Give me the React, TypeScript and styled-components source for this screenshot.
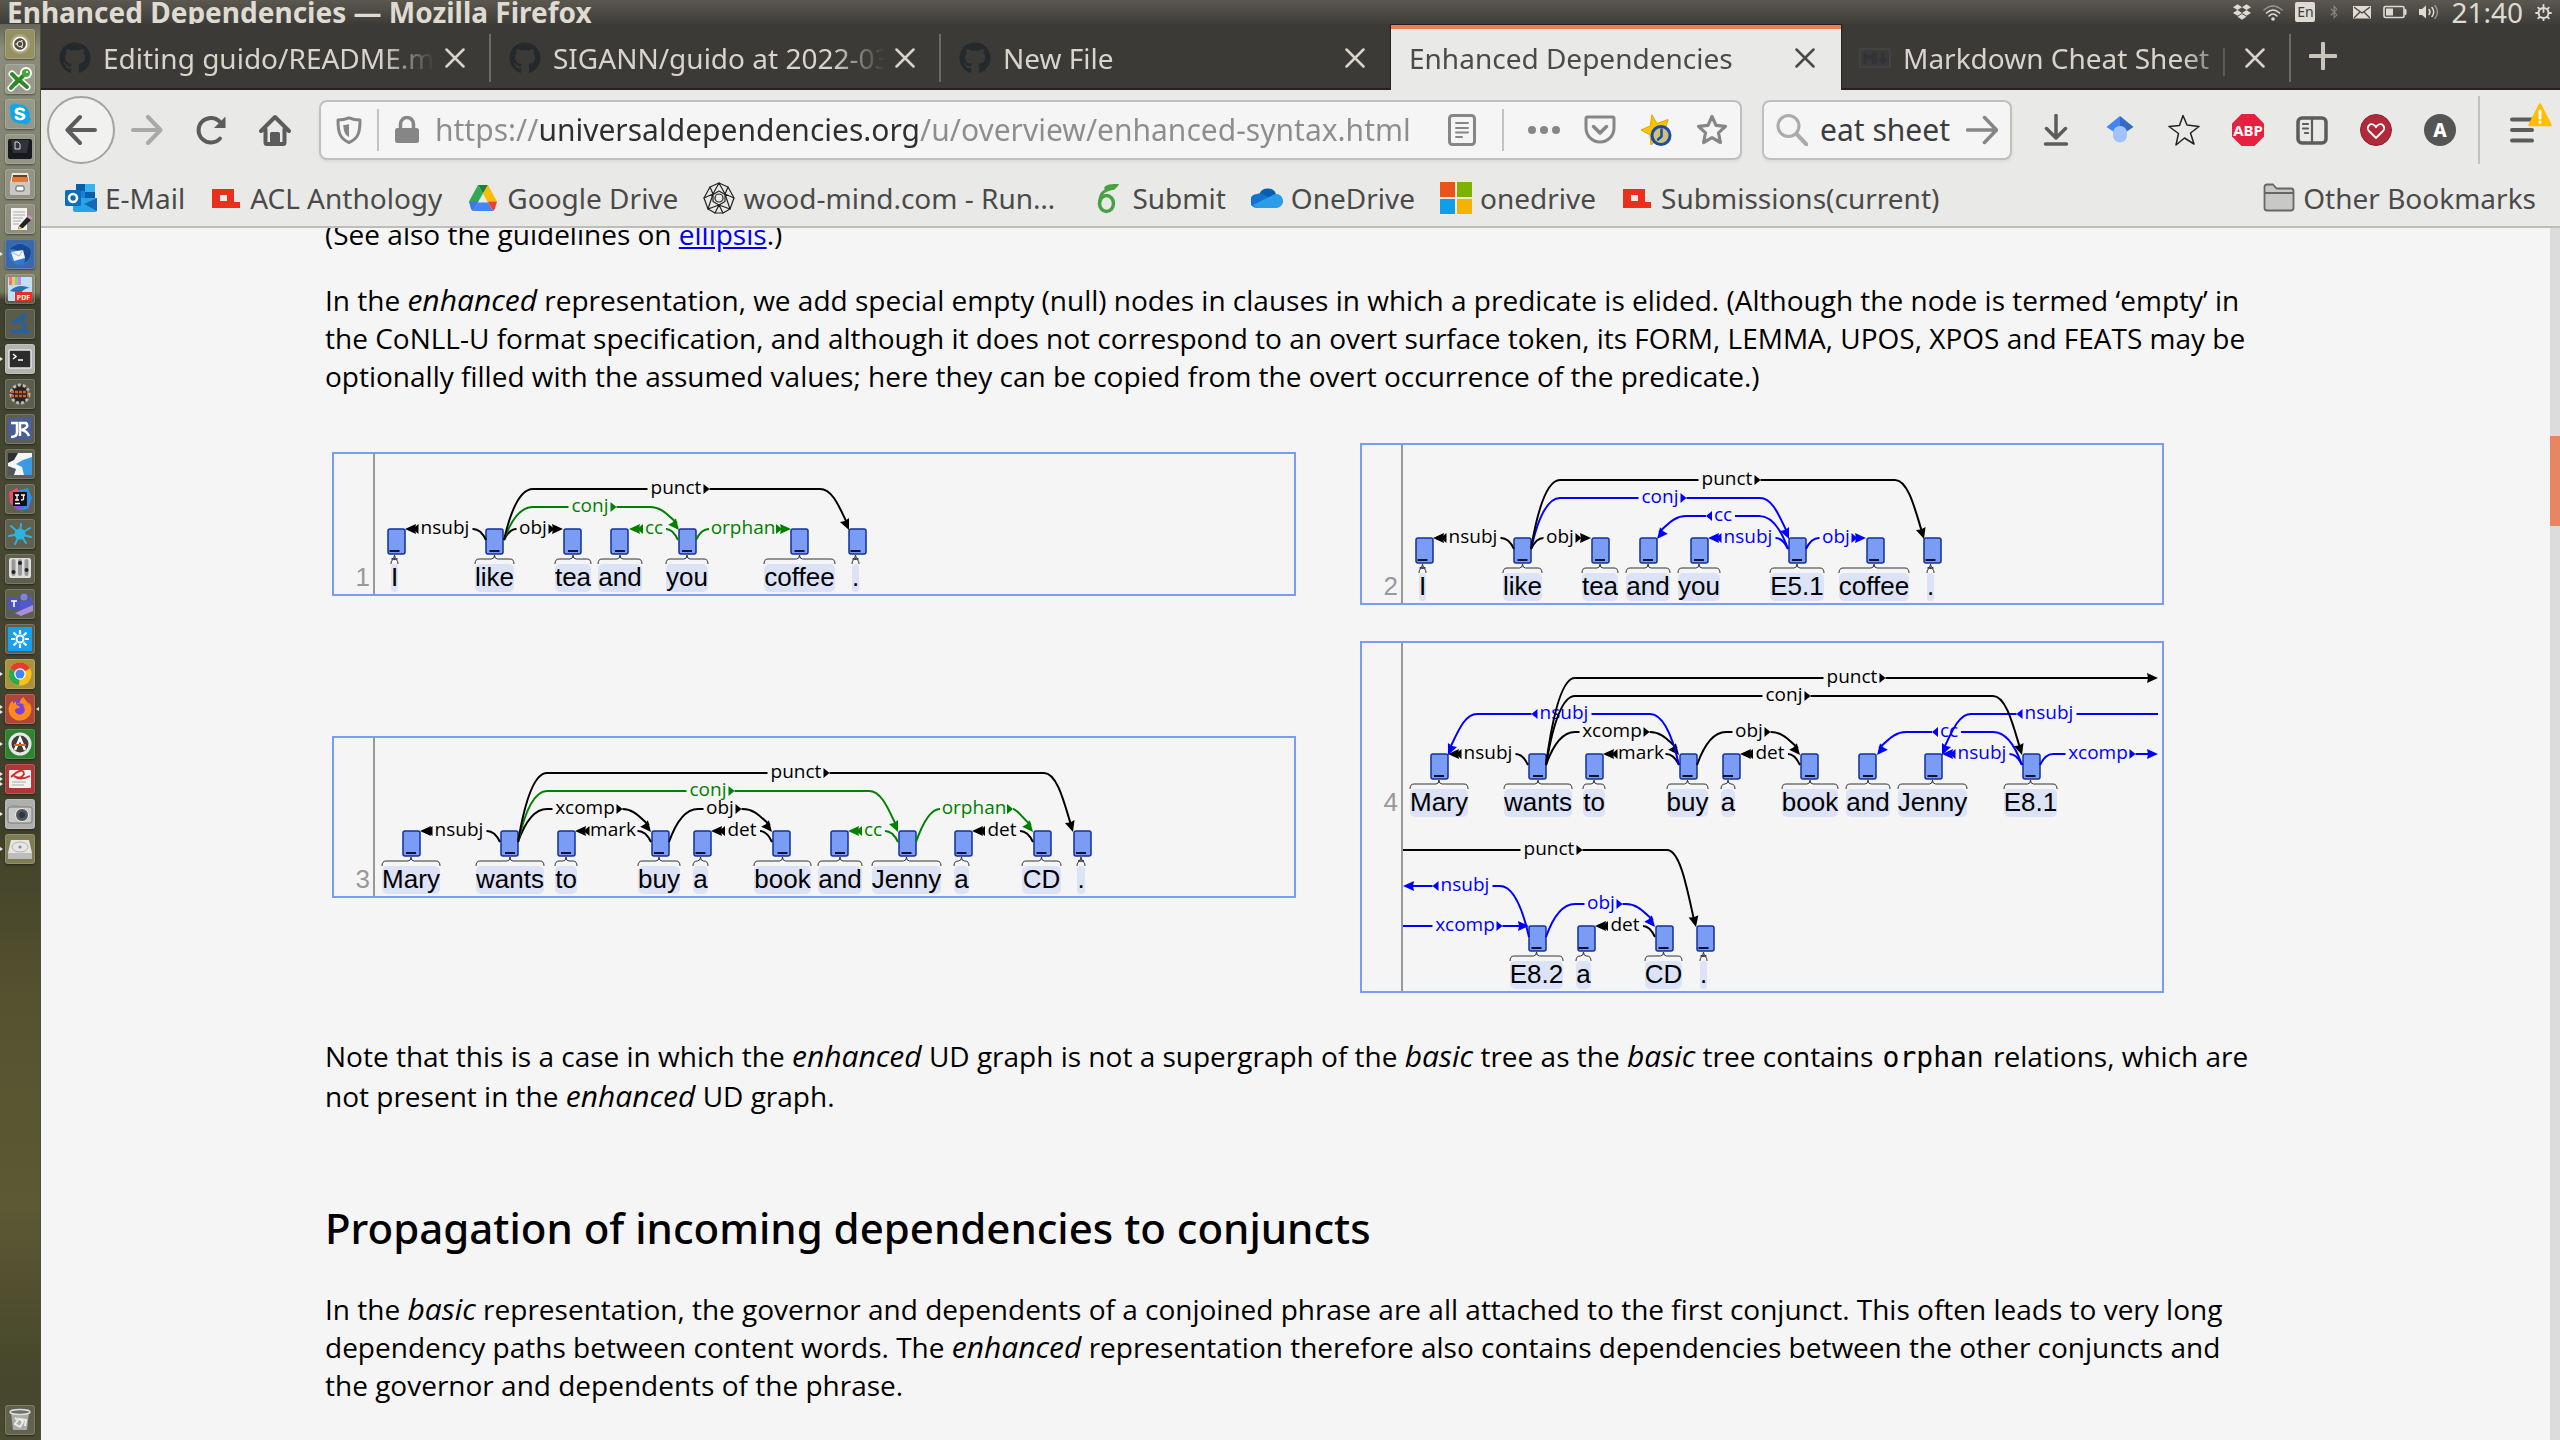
import React, { useMemo, useState } from 'react';
import type { ReactNode } from 'react';
import styled, { createGlobalStyle, css } from 'styled-components';
import { FaGithub, FaSkype, FaUbuntu, FaDropbox, FaBluetoothB, FaFirefoxBrowser } from 'react-icons/fa';

const UI = '"Noto Sans", "Open Sans", sans-serif';
const TEXT = '"Open Sans", "Noto Sans", sans-serif';
const WORDS = '"Liberation Sans", Arial, sans-serif';

const Global = createGlobalStyle`
  *, *::before, *::after { box-sizing: border-box; }
  body { margin: 0; background: #f5f5f5; }
  button { margin: 0; padding: 0; border: 0; background: none; color: inherit; font: inherit; cursor: pointer; }
  svg { display: block; flex: none; }
`;

/* ---------- desktop ---------- */

const Desktop = styled.div`
  display: flex;
  flex-direction: column;
  height: 100vh;
  overflow: hidden;
  font: 28px/38px ${UI};
`;

const Panel = styled.header`
  display: flex;
  align-items: center;
  justify-content: space-between;
  flex: none;
  height: 24px;
  padding: 0 8px 0 7px;
  overflow: hidden;
  background: linear-gradient(#5b584f, #3d3c38);
  color: #dfdbd2;
  line-height: 24px;
  white-space: nowrap;
`;

const PanelTitle = styled.strong`
  height: 24px;
  font-weight: 700;
`;

const Tray = styled.div`
  display: flex;
  align-items: center;
  gap: 12px;
  height: 24px;
`;

const LanguageBadge = styled.span`
  width: 20px;
  height: 20px;
  border-radius: 2px;
  background: #dfdbd2;
  color: #3d3c38;
  font-size: 14px;
  line-height: 20px;
  text-align: center;
`;

const Workspace = styled.div`
  display: flex;
  flex: 1;
  min-height: 0;
`;

const Launcher = styled.nav`
  display: flex;
  flex-direction: column;
  gap: 5px;
  flex: none;
  width: 41px;
  padding: 5px 5px 5px 0;
  border-right: 1px solid #4d4e42;
  background: linear-gradient(
    #66675a 0, #8b8d7b 24px, #7f816d 180px, #76775f 268px, #3d402e 276px,
    #474733 480px, #3f4029 800px, #55532f 980px, #5c5934 1180px, #45462b 1360px, #4a4b30 100%
  );
`;

const Tile = styled.button<{ $tone?: string; $last?: boolean }>`
  position: relative;
  display: flex;
  align-items: center;
  justify-content: center;
  flex: none;
  width: 30px;
  height: 30px;
  margin-left: 5px;
  margin-top: ${p => (p.$last ? 'auto' : '0')};
  border: 1px solid rgba(255, 255, 255, 0.16);
  border-radius: 3px;
  background: ${p => p.$tone ?? 'rgba(255, 255, 255, 0.14)'};
  box-shadow: 0 1px 2px rgba(0, 0, 0, 0.45);
`;

const Pips = styled.span`
  position: absolute;
  left: -6px;
  top: 0;
  display: flex;
  flex-direction: column;
  justify-content: center;
  gap: 1px;
  height: 28px;
`;

const Pip = styled.i<{ $flip?: boolean }>`
  border: solid transparent;
  border-width: 2px 0 2px 3px;
  border-left-color: #e6e6e2;
  ${p => p.$flip && css`
    position: absolute;
    right: -5px;
    border-width: 2px 3px 2px 0;
    border-right-color: #e6e6e2;
  `}
`;

/* ---------- browser window ---------- */

const Browser = styled.div`
  display: flex;
  flex-direction: column;
  flex: 1;
  min-width: 0;
`;

const TabStrip = styled.div`
  display: flex;
  flex: none;
  height: 66px;
  padding-top: 1px;
  background: #3b3a36;
  box-shadow: inset 0 -2px 0 #262022;
`;

const Tab = styled.div<{ $active?: boolean; $divider?: boolean }>`
  position: relative;
  display: flex;
  align-items: center;
  flex: 0 1 450px;
  min-width: 0;
  padding: 0 16px 0 18px;
  color: ${p => (p.$active ? '#4a4a48' : '#d8d4cb')};
  ${p => p.$active && css`
    background: #e9e9e7;
    border-top: 4px solid #e9804f;
    padding-bottom: 4px;
    box-shadow: 0 0 0 1px #262022;
    clip-path: inset(-1px -1px 0 -1px);
  `}
  ${p => p.$divider && css`
    &::after {
      content: '';
      position: absolute;
      right: 0;
      top: 9px;
      width: 2px;
      height: 48px;
      background: #6c6a65;
    }
  `}
`;

const TabTitle = styled.button`
  flex: 1;
  min-width: 0;
  overflow: hidden;
  text-align: left;
  white-space: nowrap;
  mask-image: linear-gradient(to left, transparent, #000 52px);
`;

const Favicon = styled.span`
  display: flex;
  width: 32px;
  margin-right: 12px;
  color: #24292e;
`;

const CloseButton = styled.button`
  display: flex;
  align-items: center;
  justify-content: center;
  flex: none;
  width: 40px;
  height: 40px;
`;

const NewTab = styled(CloseButton)`
  width: 64px;
  height: 62px;
  color: #c8c4bc;
`;

const Toolbar = styled.div`
  display: flex;
  align-items: center;
  flex: none;
  height: 80px;
  padding: 0 6px 0 6px;
  background: #e9e9e7;
  color: #5c5c5c;
`;

const ToolButton = styled.button<{ $faded?: boolean; $round?: boolean }>`
  position: relative;
  display: flex;
  align-items: center;
  justify-content: center;
  flex: none;
  width: 64px;
  height: 64px;
  opacity: ${p => (p.$faded ? 0.45 : 1)};
  ${p => p.$round && css`
    width: 68px;
    height: 68px;
    border: 2px solid #a3a3a2;
    border-radius: 50%;
    background: #f1f1f0;
  `}
`;

const Alert = styled.span`
  position: absolute;
  right: 2px;
  top: 5px;
`;

const Field = styled.div<{ $search?: boolean }>`
  display: flex;
  align-items: center;
  flex: ${p => (p.$search ? '0 0 250px' : '1')};
  min-width: 0;
  height: 60px;
  margin: ${p => (p.$search ? '0 12px 0 20px' : '0 0 0 12px')};
  border: 2px solid #c3bfbc;
  border-radius: 8px;
  background: #f5f5f5;
  color: #868686;
  box-shadow: 0 2px 3px rgba(0, 0, 0, 0.06);
`;

const FieldButton = styled.button`
  display: flex;
  align-items: center;
  justify-content: center;
  flex: none;
  width: 56px;
  height: 56px;
`;

const Rule = styled.i<{ $tall?: boolean }>`
  flex: none;
  width: 2px;
  height: ${p => (p.$tall ? 68 : 42)}px;
  margin: ${p => (p.$tall ? '0 10px 0 6px' : '0')};
  background: #c3c3c2;
`;

const FieldRule = styled(Rule)`
  margin: 0 12px;
`;

const TextInput = styled.input`
  flex: 1;
  min-width: 0;
  padding: 0;
  border: 0;
  outline: 0;
  background: none;
  color: #3c3c3c;
  font: 30px/40px ${UI};
`;

const AddressInput = styled(TextInput)<{ $from: number; $to: number }>`
  color: transparent;
  background: linear-gradient(
    to right,
    #8d8d8d ${p => p.$from}px, #2e2e2e ${p => p.$from}px,
    #2e2e2e ${p => p.$to}px, #8d8d8d ${p => p.$to}px
  );
  background-clip: text;
  -webkit-background-clip: text;
`;

const Bookmarks = styled.nav`
  display: flex;
  align-items: center;
  gap: 25px;
  flex: none;
  height: 58px;
  padding: 0 24px 0 24px;
  border-bottom: 2px solid #c0bdb9;
  background: #e9e9e7;
  color: #4a4a48;
`;

const Bookmark = styled.a<{ $end?: boolean }>`
  display: flex;
  align-items: center;
  gap: 8px;
  max-width: 364px;
  margin-left: ${p => (p.$end ? 'auto' : '0')};
  color: inherit;
  text-decoration: none;
  white-space: nowrap;
`;

const BookmarkLabel = styled.span`
  overflow: hidden;
  text-overflow: ellipsis;
`;

const Viewport = styled.div`
  display: flex;
  flex: 1;
  min-height: 0;
  overflow: hidden;
  background: #f5f5f5;
`;

const ScrollTrack = styled.div`
  flex: none;
  width: 10px;
  padding-top: 208px;
  background: #dcdcdc;
`;

const ScrollThumb = styled.div`
  height: 90px;
  background: #e78660;
`;

/* ---------- document ---------- */

const Article = styled.main`
  flex: 1;
  min-width: 0;
  margin-top: -13px;
  padding: 0 294px 0 284px;
  color: #000;
  font: 28px/38px ${TEXT};

  em {
    font-size: 30px;
    line-height: 1;
  }
`;

const Paragraph = styled.p<{ $loose?: boolean }>`
  margin: 0 0 28px;
  line-height: ${p => (p.$loose ? 40 : 38)}px;
`;

const Link = styled.a`
  color: #0000ee;
  text-decoration: underline;
`;

const Code = styled.code`
  margin: 0 2px;
  font: 28px/1 "DejaVu Sans Mono", monospace;
`;

const Heading = styled.h2`
  margin: 83px 0 34px;
  font-family: ${UI};
  font-size: 42px;
  font-weight: 500;
  line-height: 57px;
`;

const Figures = styled.section`
  display: grid;
  grid-template-columns: 964fr 804fr;
  gap: 36px 64px;
  align-items: center;
  margin: 48px 92px 43px 7px;
`;

const Frame = styled.figure`
  margin: 0;
  overflow: hidden;
  border: 2px solid #7b9cf5;
`;

/* ---------- dependency diagrams ---------- */

type Word = [text: string, left: number, right: number, box: number];
type Arc = {
  label: string;
  at: number;
  from: number;
  to: number;
  level: number;
  color?: string;
  openFrom?: boolean;
  openTo?: boolean;
};
type Line = { base: number; words: Word[]; arcs: Arc[] };

const GREEN = '#008000';
const BLUE = '#0000ff';
const LEVELS = [57, 79, 97, 115, 133];
const LABEL_WIDTH: Record<string, number> = {
  nsubj: 49, obj: 27, punct: 51, conj: 37, cc: 18, orphan: 62, xcomp: 59, mark: 43, det: 30,
};

function ArcPath({ arc, base }: { arc: Arc; base: number }) {
  const { label, at, from, to, level, color = '#000', openFrom, openTo } = arc;
  const dir = to > from ? 1 : -1;
  const y = base - LEVELS[level];
  const half = LABEL_WIDTH[label] / 2;
  const nearX = at - dir * (half + 3);
  const tipX = at + dir * (half + 8);
  const bend = level === 0 ? 13 : 29;
  const startY = base - 46;
  const endY = base - 57;

  const start = openFrom
    ? `M${from} ${y}H${nearX}`
    : `M${from} ${startY}C${from + dir * bend * 0.2} ${(startY + y) / 2} ${from + dir * bend * 0.5} ${y} ${
        from + dir * Math.min(bend, Math.abs(nearX - from))
      } ${y}H${nearX}`;

  const flat = level === 0 || openTo;
  const drop = endY - y;
  const angle = flat ? (dir > 0 ? 0 : 180) : (Math.atan2(drop * 0.5, dir * 9) * 180) / Math.PI;
  const end = flat
    ? `M${tipX} ${y}H${to - dir * 8}`
    : `M${tipX} ${y}H${to - dir * Math.min(29, Math.abs(to - tipX))}C${to - dir * 16} ${y} ${to - dir * 9} ${
        endY - drop * 0.5
      } ${to - dir * 2} ${endY - 6}`;

  return (
    <g stroke={color} fill={color}>
      <path d={`${start}${end}`} fill="none" strokeWidth="2" />
      <path d={`M${tipX} ${y}l${-dir * 6} -5v10z`} stroke="none" />
      <path
        d="M0 0L-11 -5L-10 0L-11 5z"
        stroke="none"
        transform={`translate(${to} ${flat ? y : endY + 1}) rotate(${angle})`}
      />
      <text x={at} y={y + 5} textAnchor="middle" stroke="none" fontFamily={TEXT} fontSize="19">
        {label}
      </text>
    </g>
  );
}

function Token({ word, base }: { word: Word; base: number }) {
  const [text, left, right, box] = word;
  const mid = (left + right) / 2;
  const top = base - 27;
  return (
    <g>
      <rect x={left} y={base - 22} width={right - left} height="28" rx={Math.min(5, (right - left) / 2)} fill="#dce3f6" />
      <rect x={box - 8} y={base - 57} width="17" height="25" rx="2" fill="#7b9cf5" stroke="#123196" strokeWidth="1.500" />
      <path d={`M${mid - 5} ${base - 35}h10`} stroke="#0a1030" strokeWidth="2" />
      <path
        d={`M${left} ${base - 22}q0 -5 4 -5L${mid - 3} ${top}q3 0 3 -4q0 4 3 4L${right - 4} ${top}q4 0 4 5`}
        fill="none"
        stroke="#333"
        strokeWidth="1"
      />
      <text x={mid} y={base} textAnchor="middle" fontFamily={WORDS} fontSize="26">
        {text}
      </text>
    </g>
  );
}

function Diagram({ no, origin, height, lines }: { no: number; origin: number; height: number; lines: Line[] }) {
  return (
    <Frame>
      <svg width="100%" height={height} role="img" aria-label={`Dependency graph ${no}`}>
        <path d={`M40 0V${height}`} stroke="#999" strokeWidth="2" />
        <text x="36" y={lines[0].base} textAnchor="end" fill="#999" fontFamily={WORDS} fontSize="26">
          {no}
        </text>
        <g transform={`translate(${-origin} 0)`}>
          {lines.map(line => (
            <g key={line.base}>
              {line.words.map((word, i) => <Token key={i} word={word} base={line.base} />)}
              {line.arcs.map((arc, i) => <ArcPath key={i} arc={arc} base={line.base} />)}
            </g>
          ))}
        </g>
      </svg>
    </Frame>
  );
}

const basicGapping: Line[] = [{
  base: 132,
  words: [
    ['I', 391, 398, 396], ['like', 475, 514, 494], ['tea', 555, 591, 572], ['and', 598, 642, 619],
    ['you', 666, 708, 687], ['coffee', 764, 835, 799], ['.', 852, 859, 857],
  ],
  arcs: [
    { label: 'nsubj', at: 445, from: 486, to: 405, level: 0 },
    { label: 'obj', at: 533, from: 504, to: 563, level: 0 },
    { label: 'conj', at: 590, from: 504, to: 679, level: 1, color: GREEN },
    { label: 'punct', at: 676, from: 504, to: 849, level: 2 },
    { label: 'cc', at: 654, from: 678, to: 629, level: 0, color: GREEN },
    { label: 'orphan', at: 743, from: 696, to: 791, level: 0, color: GREEN },
  ],
}];

const enhancedGapping: Line[] = [{
  base: 150,
  words: [
    ['I', 1419, 1426, 1424], ['like', 1503, 1542, 1522], ['tea', 1582, 1618, 1600], ['and', 1626, 1670, 1648],
    ['you', 1678, 1720, 1699], ['E5.1', 1770, 1824, 1797], ['coffee', 1839, 1909, 1875], ['.', 1927, 1934, 1932],
  ],
  arcs: [
    { label: 'nsubj', at: 1473, from: 1514, to: 1433, level: 0 },
    { label: 'obj', at: 1560, from: 1531, to: 1591, level: 0 },
    { label: 'conj', at: 1660, from: 1531, to: 1789, level: 2, color: BLUE },
    { label: 'punct', at: 1727, from: 1531, to: 1924, level: 3 },
    { label: 'cc', at: 1723, from: 1788, to: 1657, level: 1, color: BLUE },
    { label: 'nsubj', at: 1748, from: 1788, to: 1708, level: 0, color: BLUE },
    { label: 'obj', at: 1836, from: 1806, to: 1866, level: 0, color: BLUE },
  ],
}];

const basicControl: Line[] = [{
  base: 150,
  words: [
    ['Mary', 382, 440, 411], ['wants', 476, 544, 509], ['to', 555, 577, 566], ['buy', 638, 680, 660],
    ['a', 693, 708, 702], ['book', 754, 811, 781], ['and', 818, 862, 839], ['Jenny', 872, 941, 907],
    ['a', 954, 969, 963], ['CD', 1022, 1061, 1042], ['.', 1077, 1085, 1082],
  ],
  arcs: [
    { label: 'nsubj', at: 459, from: 500, to: 420, level: 0 },
    { label: 'mark', at: 613, from: 651, to: 575, level: 0 },
    { label: 'det', at: 742, from: 772, to: 711, level: 0 },
    { label: 'cc', at: 873, from: 898, to: 848, level: 0, color: GREEN },
    { label: 'det', at: 1002, from: 1033, to: 972, level: 0 },
    { label: 'xcomp', at: 585, from: 518, to: 651, level: 1 },
    { label: 'obj', at: 720, from: 669, to: 772, level: 1 },
    { label: 'orphan', at: 974, from: 916, to: 1033, level: 1, color: GREEN },
    { label: 'conj', at: 708, from: 518, to: 898, level: 2, color: GREEN },
    { label: 'punct', at: 796, from: 518, to: 1073, level: 3 },
  ],
}];

const enhancedControl: Line[] = [
  {
    base: 168,
    words: [
      ['Mary', 1410, 1468, 1439], ['wants', 1504, 1572, 1537], ['to', 1583, 1605, 1594], ['buy', 1667, 1708, 1688],
      ['a', 1721, 1735, 1731], ['book', 1782, 1838, 1809], ['and', 1846, 1890, 1867], ['Jenny', 1898, 1967, 1933],
      ['E8.1', 2004, 2057, 2031],
    ],
    arcs: [
      { label: 'nsubj', at: 1488, from: 1528, to: 1448, level: 0 },
      { label: 'mark', at: 1641, from: 1679, to: 1603, level: 0 },
      { label: 'det', at: 1770, from: 1800, to: 1740, level: 0 },
      { label: 'nsubj', at: 1982, from: 2022, to: 1942, level: 0, color: BLUE },
      { label: 'xcomp', at: 2098, from: 2040, to: 2158, level: 0, color: BLUE, openTo: true },
      { label: 'xcomp', at: 1612, from: 1546, to: 1679, level: 1 },
      { label: 'obj', at: 1749, from: 1697, to: 1800, level: 1 },
      { label: 'cc', at: 1949, from: 2022, to: 1877, level: 1, color: BLUE },
      { label: 'nsubj', at: 1564, from: 1679, to: 1448, level: 2, color: BLUE },
      { label: 'nsubj', at: 2049, from: 2158, to: 1942, level: 2, color: BLUE, openFrom: true },
      { label: 'conj', at: 1784, from: 1546, to: 2022, level: 3 },
      { label: 'punct', at: 1852, from: 1546, to: 2158, level: 4, openTo: true },
    ],
  },
  {
    base: 340,
    words: [['E8.2', 1510, 1563, 1537], ['a', 1576, 1591, 1586], ['CD', 1645, 1682, 1664], ['.', 1700, 1707, 1705]],
    arcs: [
      { label: 'punct', at: 1549, from: 1403, to: 1696, level: 4, openFrom: true },
      { label: 'nsubj', at: 1465, from: 1529, to: 1403, level: 2, color: BLUE, openTo: true },
      { label: 'obj', at: 1601, from: 1546, to: 1655, level: 1, color: BLUE },
      { label: 'xcomp', at: 1465, from: 1403, to: 1529, level: 0, color: BLUE, openFrom: true },
      { label: 'det', at: 1625, from: 1655, to: 1595, level: 0 },
    ],
  },
];

/* ---------- icons ---------- */

function Icon({ size = 32, box = 32, children }: { size?: number; box?: number; children: ReactNode }) {
  return (
    <svg width={size} height={size} viewBox={`0 0 ${box} ${box}`} fill="none" stroke="currentColor" strokeWidth="3" strokeLinecap="round" strokeLinejoin="round" aria-hidden="true">
      {children}
    </svg>
  );
}

const STAR = 'M16 2.500l4 8.800 9.500 1-7 6.500 1.900 9.700-8.400-4.900-8.400 4.900 1.900-9.700-7-6.500 9.500-1z';

const closeIcon = <Icon size={20} box={20}><path d="M1.500 1.500l17 17M18.500 1.500l-17 17" strokeWidth="2.500" /></Icon>;
const plusIcon = <Icon size={28} box={28}><path d="M14 1.500v25M1.500 14h25" strokeWidth="4" /></Icon>;
const backIcon = <Icon><path d="M30 16H3M15 3L2.500 16 15 29" strokeWidth="4" /></Icon>;
const forwardIcon = <Icon><path d="M2 16h27M17 3l12.500 13L17 29" strokeWidth="4" /></Icon>;
const reloadIcon = <Icon><path d="M25 24.500A12.300 12.300 0 1 1 25.500 8.500" strokeWidth="4" /><path d="M30.500 2.500v11.500h-11.500z" fill="currentColor" stroke="none" /></Icon>;
const homeIcon = <Icon><path d="M2 17L16 3l14 14M6.500 15v13.500q0 1.500 1.500 1.500h16q1.500 0 1.500-1.500V15" strokeWidth="4" /><path d="M12.500 30V19.500h7V30" strokeWidth="3" fill="currentColor" /></Icon>;
const shieldIcon = <Icon size={28} box={28}><path d="M14 1.800C10 3.500 6 4 3 4c0 12 1.500 18.500 11 22.500C23.500 22.500 25 16 25 4c-3 0-7-.5-11-2.200z" /><path d="M14 8v13c-4-2-5.500-6-5.700-12 2-.1 4-.3 5.700-1z" fill="currentColor" stroke="none" /></Icon>;
const lockIcon = <Icon size={28} box={28}><rect x="2" y="12" width="24" height="15" rx="2.500" fill="currentColor" stroke="none" /><path d="M7.500 12V8a6.500 6.500 0 0 1 13 0v4" strokeWidth="3.500" /></Icon>;
const readerIcon = <Icon><rect x="3.500" y="1.500" width="25" height="29" rx="3" /><path d="M10 9h12M10 14h12M10 18.500h12M10 23h6" strokeWidth="2" /></Icon>;
const dotsIcon = <Icon><g fill="currentColor" stroke="none"><circle cx="4" cy="16" r="4" /><circle cx="16" cy="16" r="4" /><circle cx="28" cy="16" r="4" /></g></Icon>;
const pocketIcon = <Icon><path d="M3.500 3h25q1.500 0 1.500 1.500V14a14 14 0 0 1-28 0V4.500Q2 3 3.500 3z" /><path d="M9.500 12.500l6.500 6.500 6.500-6.500" strokeWidth="3.500" /></Icon>;
const starClockIcon = <Icon><path d="M12 1l5 8.500 11-4-3 10.500 4 6-10 2-8 7-1-10L1 16l9-4z" fill="#f5c211" stroke="#e0a800" strokeWidth="1" /><circle cx="21" cy="21.500" r="9" fill="#cfc37a" stroke="#1d4aa8" /><path d="M21.500 15.500v7l-3.500 3" stroke="#1d4aa8" strokeWidth="2.500" /></Icon>;
const starIcon = <Icon><path d={STAR} strokeWidth="3.200" /></Icon>;
const thinStarIcon = <Icon><path d="M15 1.500l4 9.500 12 1.500-8.500 6.500 3.500 11-9.500-6-8.500 7 2.500-11.500L1 12.500l10.500-1z" stroke="#222" strokeWidth="1.500" /></Icon>;
const searchIcon = <Icon><circle cx="12.500" cy="12" r="10.500" stroke="#aaa" /><path d="M20.500 20l10 10.500" stroke="#aaa" strokeWidth="4" /></Icon>;
const goIcon = <Icon><path d="M1.500 16h28M18.500 3.500L30.500 16 18.500 28.500" strokeWidth="3.500" /></Icon>;
const downloadIcon = <Icon><path d="M16 1.500v22M6.500 14.500l9.500 9.500 9.500-9.500M5.500 30h21" strokeWidth="3.500" /></Icon>;
const scholarIcon = <Icon><g stroke="none"><path d="M16 2L2.500 13 10 18h6z" fill="#4285f4" /><path d="M16 2l13.500 11L22 18h-6z" fill="#356ac3" /><circle cx="16" cy="19" r="7" fill="#80aaf6" /><path d="M9 19a7 7 0 0 1 14 0v2.500a7 7 0 0 1-14 0z" fill="#a0c3ff" /></g></Icon>;
const abpIcon = <Icon><path d="M9.500 0h13L32 9.500v13L22.500 32h-13L0 22.500v-13z" fill="#e8203f" stroke="none" /><text x="16" y="21.500" textAnchor="middle" fill="#fff" stroke="none" fontFamily={UI} fontWeight="700" fontSize="15">ABP</text></Icon>;
const sidebarIcon = <Icon><rect x="2" y="4" width="28" height="25" rx="4" strokeWidth="3.500" /><path d="M16 5v23M7 10h5M7 14.500h5M9 19h3" strokeWidth="2.200" /></Icon>;
const heartIcon = <Icon><circle cx="16" cy="16" r="15.500" fill="#b02a3c" stroke="#8d2030" strokeWidth="1" /><path d="M16 24l-7-7c-3-3.500.5-8 4-6.500 1.500.7 2.400 1.500 3 2.700.6-1.200 1.500-2 3-2.700 3.500-1.500 7 3 4 6.500z" stroke="#fff" strokeWidth="1.800" /></Icon>;
const accountIcon = <Icon><circle cx="16" cy="16" r="16" fill="#555" stroke="none" /><text x="16" y="23" textAnchor="middle" fill="#fff" stroke="none" fontFamily={UI} fontWeight="800" fontSize="19">A</text></Icon>;
const menuIcon = <Icon><path d="M6 5.500h20M6 16h20M6 26.500h20" strokeWidth="4" /></Icon>;
const alertIcon = <Icon size={24} box={24}><path d="M12 1.500L22.500 22h-21z" fill="#ffbf00" stroke="#ffbf00" strokeWidth="2.500" /><path d="M12 8v7M12 19v.4" stroke="#fff" strokeWidth="3" /></Icon>;

const outlookIcon = <Icon><g stroke="none"><path d="M11 2h19v14H11z" fill="#0a5ea8" /><path d="M20 2h10v8H20z" fill="#35b3ee" /><path d="M11 9h9v8h-9z" fill="#1285d8" /><path d="M8 16l24 0v12q0 2-2 2H10q-2 0-2-2z" fill="#2aa3e6" /><path d="M32 16v13L19 22z" fill="#1568b8" /><rect y="8" width="16" height="16" rx="1.500" fill="#0f6cbd" /></g><circle cx="8" cy="16" r="4" stroke="#fff" strokeWidth="2.500" /></Icon>;
const aclIcon = <Icon><path d="M2 7h22v13h6v6H2zM10 13v6h7v-6z" fill="#ea2f1c" fillRule="evenodd" stroke="none" /></Icon>;
const driveIcon = <Icon><g stroke="none"><path d="M11 3h10l-5 8.500z" fill="#188038" /><path d="M11 3L2 19.500l4 9L16 11.500z" fill="#34a853" /><path d="M21 3l9 16.500H20.500L16 11.500z" fill="#fbbc04" /><path d="M2 19.500h9.500L6 29q-1.500-1-2-2z" fill="#3c78e6" /><path d="M11 20.500h10l5 8.500H6z" fill="#4285f4" /><path d="M20.500 19.500H30l-2 7q-1 2-2 2.500z" fill="#ea4335" /></g></Icon>;
const woodIcon = <Icon><g stroke="#222" strokeWidth="1.200"><path d="M16 1l9 4 6 11-4 11-7 4h-8l-7-4-4-11L7 5z" /><path d="M16 1l-6 11-5 15M16 1l6 11 5 15M1 16l9-4M31 16l-9-4M7 5l3 7M25 5l-3 7M12 31l4-8 4 8M5 27l11-4 11 4" /><path d="M16 9l6 3.500v7L16 23l-6-3.500v-7z" /><circle cx="16" cy="16" r="4" /></g></Icon>;
const overleafIcon = <Icon><g stroke="#47a141"><ellipse cx="14.500" cy="21.500" rx="7" ry="8" strokeWidth="3.500" /><path d="M8 19C8 11 12 8 22 6" strokeWidth="3" /><path d="M12 6c2-4 7-4 15-4-2 5-7 6-13 7z" fill="#47a141" stroke="none" /></g></Icon>;
const oneDriveIcon = <Icon><g stroke="none"><path d="M8 13a9 9 0 0 1 17-1l-8 8z" fill="#0a5cad" /><path d="M6 26a7 7 0 0 1 0-14c3-1 6 0 8 1.500L22 18 6 26z" fill="#1173cf" /><path d="M24 12a7 7 0 0 1 2 14H7q-3 0-5-3l16-8z" fill="#2a9ce8" /></g></Icon>;
const microsoftIcon = <Icon><g stroke="none"><path d="M0 0h15v15H0z" fill="#e9541d" /><path d="M17 0h15v15H17z" fill="#7eb200" /><path d="M0 17h15v15H0z" fill="#0d9fe9" /><path d="M17 17h15v15H17z" fill="#f5b300" /></g></Icon>;
const folderIcon = <Icon><path d="M1.500 26V5q0-2.500 2.500-2.500h6l3.500 4H28q2.500 0 2.500 2.500v17q0 2.500-2.500 2.500H4q-2.500 0-2.500-2.500z" fill="#c8c8c7" strokeWidth="1.800" stroke="#666" /><path d="M2 11h28" strokeWidth="1.800" stroke="#666" /></Icon>;
const markdownIcon = <Icon><rect x="1" y="7" width="30" height="18" stroke="#45454a" strokeWidth="1.500" /><path d="M6 21v-9l4 4 4-4v9M17 12v9M24 12v8M21 17l3 4 3-4" stroke="#303338" strokeWidth="2.500" /></Icon>;

const wifiIcon = <Icon size={20} box={20}><g strokeWidth="1.600"><path d="M1 8q9-8 18 0" opacity=".5" /><path d="M3.500 11q6.500-6 13 0M6 14q4-4 8 0" /></g><circle cx="10" cy="17" r="1.800" fill="currentColor" stroke="none" /></Icon>;
const mailIcon = <Icon size={18} box={18}><rect y="3" width="18" height="12.500" fill="#dfdbd2" stroke="none" /><path d="M1.500 4.500L9 10l7.500-5.500M1.500 14.500l5-5M16.500 14.500l-5-5" stroke="#45433d" strokeWidth="1.300" /></Icon>;
const batteryIcon = <Icon size={24} box={24}><rect x="1" y="6.500" width="20" height="11" rx="1.500" strokeWidth="1.600" /><path d="M22.500 10v4" strokeWidth="2" /><path d="M3 8.500h7v7H3z" fill="currentColor" stroke="none" /></Icon>;
const volumeIcon = <Icon size={20} box={20}><path d="M0 7h3l4-3.500v13L3 13H0z" fill="currentColor" stroke="none" /><g strokeWidth="1.500"><path d="M10 7.500q2 2.500 0 5M13 5.500q3.500 4.500 0 9" /><path d="M16 3.500q5 6.500 0 13" opacity=".5" /></g></Icon>;
const powerIcon = <Icon size={17} box={17}><circle cx="8.500" cy="9" r="5" strokeWidth="2" /><path d="M8.500 1v7M1 9h2M14 9h2M3.200 3.700l1.300 1.300M13.800 3.700l-1.300 1.300M3.200 14.300l1.300-1.300M13.800 14.300l-1.300-1.300M8.500 15v1.500" strokeWidth="1.800" /></Icon>;

const art = (children: ReactNode) => (
  <svg width="26" height="26" viewBox="0 0 26 26" fill="none" aria-hidden="true">{children}</svg>
);

type App = { name: string; icon: ReactNode; tone?: string; windows?: number; focused?: boolean };

const apps: App[] = [
  { name: 'Dash', tone: '#958f62', icon: art(<><circle cx="13" cy="13" r="10" fill="#aaa57f" /><circle cx="13" cy="13" r="7.500" fill="#fff" /><g color="#4d4a38"><FaUbuntu x="7" y="7" size={12} /></g></>) },
  { name: 'Notes', icon: art(<><path d="M5 8l6 6-7 8M12 14l8 7M8 18l8-8" stroke="#fff" strokeWidth="7" strokeLinecap="round" /><circle cx="19" cy="7" r="6" fill="#fff" /><path d="M5 8l6 6-7 8M12 14l8 7M8 18l8-8" stroke="#2f8a24" strokeWidth="4" strokeLinecap="round" /><circle cx="19" cy="7" r="4" fill="#4aa53a" /><circle cx="20" cy="6" r="1" fill="#fff" /></>) },
  { name: 'Skype', icon: art(<><circle cx="13" cy="13" r="9" fill="#fff" /><g color="#12a5e8"><FaSkype x="1" y="1" size={24} /></g></>) },
  { name: 'Keyboard', icon: art(<><rect x="1" y="3" width="24" height="20" rx="2" fill="#17191c" /><path d="M4 4h18l-2 13H6z" fill="#30343a" /><path d="M8 6h3l2 2v5H8z" stroke="#d8d8d8" /></>) },
  { name: 'Files', icon: art(<><path d="M5 2h16l2 11H3z" fill="#e9e6df" /><path d="M6 4h14v3H6z" fill="#6b3a20" /><path d="M5 6h16v6H5z" fill="#e8782c" /><rect x="3" y="11" width="20" height="13" rx="1" fill="#c9c9c6" /><rect x="9" y="15" width="8" height="5" rx="1" fill="#fff" stroke="#555" /></>) },
  { name: 'Text Editor', icon: art(<><path d="M4 2h16v22H4z" fill="#f3f3f1" /><path d="M6 6h12M6 9h12M6 12h10M6 15h8M6 18h6" stroke="#a9a9a9" /><path d="M12 20l8-9 4 3-8 8-5 1z" fill="#222" /><path d="M12 20l3 2-4 2z" fill="#f0c030" /><path d="M20 11l2-2 4 3-2 2z" fill="#d58ac0" /></>) },
  { name: 'Thunderbird', tone: '#3c67a8', windows: 1, icon: art(<><circle cx="13" cy="13" r="11" fill="#2d7ad0" /><path d="M3 8Q13-2 23 8q3 9-6 14 4-8-5-12Q8 8 3 8z" fill="#174a92" /><path d="M4 11l12-2 2 8-11 3z" fill="#f2f4f7" /><path d="M4 11l8 4 4-6" stroke="#9fb2c9" /></>) },
  { name: 'PDF Editor', icon: art(<><rect x="1" y="1" width="24" height="24" rx="1" fill="#bfe0f5" /><path d="M2 1h3v8H2z" fill="#e77" /><path d="M5 1h3v8H5z" fill="#ec6" /><path d="M8 1h3v8H8z" fill="#8c8" /><path d="M11 1h3v8h-3z" fill="#c8e" /><path d="M3 15q8-8 20-3-6 0-9 5z" fill="#2d6fb5" /><rect x="8" y="16" width="17" height="9" fill="#e52f24" /><text x="16.500" y="23.500" textAnchor="middle" fill="#fff" fontFamily={UI} fontWeight="700" fontSize="7">PDF</text></>) },
  { name: 'Microscope', icon: art(<path d="M3 22h19v-3h-4q4-7-3-10l5-4-2-3-13 8 2 4 6-3q5 4 1 8H3z" fill="#2a5f9e" />) },
  { name: 'Terminal', tone: '#b3b3af', windows: 1, icon: art(<><rect x="2" y="4" width="22" height="18" rx="1" fill="#2b2b2b" stroke="#e4e4e4" strokeWidth="1.500" /><path d="M6 8l3 2.500L6 13M11 14h5" stroke="#fff" strokeWidth="1.500" /></>) },
  { name: 'Java IDE', icon: art(<><circle cx="13" cy="13" r="9" fill="#2a2320" stroke="#b9b9b6" strokeWidth="3" strokeDasharray="3 2" /><path d="M4 11h18M4 15h18" stroke="#c4681e" strokeWidth="2.500" strokeDasharray="3 1" /></>) },
  { name: 'JabRef', icon: art(<><rect x="1" y="2" width="24" height="22" fill="#4a5d97" /><path d="M4 7h6v9q0 5-6 5M13 20V7h6q4 4-4 7 5 1 7 6" stroke="#fff" strokeWidth="2.500" /></>) },
  { name: 'Sketch', icon: art(<><rect x="1" y="2" width="24" height="22" fill="#f4f6f8" /><path d="M1 2h10L7 9l-6 3z" fill="#2d3136" /><path d="M25 6l-9 3-7 4 6 3 2 8h8z" fill="#3b9be0" /><path d="M1 15l8 3-2 6H1z" fill="#50565c" /></>) },
  { name: 'IntelliJ IDEA', icon: art(<><path d="M2 6l8-4 6 9-8 11-5-5z" fill="#f2496b" /><path d="M12 4l9-2 4 10-4 11-9 1z" fill="#2b8df0" /><path d="M4 17l6 7 8-3z" fill="#7b57d8" /><rect x="6" y="6" width="14" height="14" fill="#111" /><path d="M8 9h4M10 9v5M8 14h4M14 9h4M16.500 9v4q0 1-2.500 1M8 17.500h5" stroke="#fff" strokeWidth="1.300" /></>) },
  { name: 'Splash', icon: art(<><circle cx="13" cy="13" r="5.500" fill="#2bb4df" /><path d="M13 13L4 5M13 13l1-10M13 13l10-6M13 13l11 3M13 13l6 9M13 13l-5 10M13 13L2 15" stroke="#2bb4df" strokeWidth="2" strokeLinecap="round" /></>) },
  { name: 'Mixer', icon: art(<><rect x="2" y="2" width="22" height="20" rx="2" fill="#dededc" /><path d="M6.500 5v13M13 5v13M19.500 5v13" stroke="#97989a" strokeWidth="4" strokeLinecap="round" /><circle cx="6.500" cy="16" r="2" fill="#222" /><circle cx="13" cy="7" r="2" fill="#222" /><circle cx="19.500" cy="14" r="2" fill="#222" /></>) },
  { name: 'Teams', icon: art(<><circle cx="17" cy="6" r="3.500" fill="#7b83eb" /><circle cx="23" cy="8" r="2.500" fill="#5059c9" /><path d="M11 10h15v7q-3 6-9 5-6-1-6-6z" fill="#5059c9" /><rect x="1" y="7" width="12" height="12" rx="1" fill="#4b53bc" /><path d="M4 10h6M7 10v6" stroke="#fff" strokeWidth="1.600" /><path d="M8 22l18-8v6l-12 5z" fill="#a98fd8" /></>) },
  { name: 'Sun', icon: art(<><rect x="1" y="1" width="24" height="24" fill="#17a0ee" /><circle cx="13" cy="13" r="3.500" stroke="#fff" strokeWidth="2" /><path d="M13 4v4M13 18v4M4 13h4M18 13h4M6.500 6.500l3 3M16.500 16.500l3 3M19.500 6.500l-3 3M9.500 16.500l-3 3" stroke="#fff" strokeWidth="2.200" /></>) },
  { name: 'Chrome', tone: '#a8923d', windows: 1, icon: art(<><circle cx="13" cy="13" r="11.500" fill="#fbc116" /><path d="M13 13L3 7.300A11.500 11.500 0 0 1 23 7.300z" fill="#e33b2e" /><path d="M13 13L3 7.300a11.500 11.500 0 0 0 9 17.200z" fill="#2da94f" /><circle cx="13" cy="13" r="5.800" fill="#fff" /><circle cx="13" cy="13" r="4.500" fill="#4285f4" /></>) },
  { name: 'Firefox', tone: '#ae4638', windows: 2, focused: true, icon: art(<><circle cx="13" cy="13" r="10" fill="#7b3fe0" /><g color="#ff8a1c"><FaFirefoxBrowser x="1" y="1" size={24} /></g></>) },
  { name: 'Software Updater', tone: '#2f8230', windows: 1, icon: art(<><circle cx="13" cy="13" r="10" fill="#3d3d3d" stroke="#e8e8e6" strokeWidth="3" /><path d="M8 19l5-12 5 12" stroke="#fff" strokeWidth="2.500" /><path d="M7 14h12" stroke="#e35f22" strokeWidth="2" /></>) },
  { name: 'Document Viewer', tone: '#b03638', windows: 3, icon: art(<><rect x="2" y="4" width="22" height="18" rx="1" fill="#f2f2f0" /><path d="M4 11Q16 0 17 8 14 14 7 10q6 5 16 0" stroke="#d4282c" strokeWidth="1.800" /><path d="M5 16h14M5 19h12" stroke="#aaa" /></>) },
  { name: 'Screenshot', tone: '#aeb0ae', windows: 1, icon: art(<><rect x="1" y="6" width="24" height="16" rx="2" fill="#c8c9c9" stroke="#777" /><path d="M4 6l1-2h6l1 2" fill="#999" /><circle cx="15" cy="14" r="6.500" fill="#555" stroke="#eee" /><circle cx="15" cy="14" r="3" fill="#1e3a52" /></>) },
  { name: 'Disk', tone: '#7f7b52', windows: 1, icon: art(<><path d="M4 4h18l3 13H1z" fill="#e6e6e4" /><path d="M1 17h24v6H1z" fill="#bdbdbb" /><ellipse cx="13" cy="11" rx="8" ry="5" stroke="#b0b0ae" /><circle cx="13" cy="11" r="1.500" fill="#888" /></>) },
];

const trashIcon = art(<><path d="M4 5h18l-2 18H6z" fill="#a9aca8" /><ellipse cx="13" cy="5" rx="10" ry="2.500" fill="#6d706c" stroke="#dcdedb" strokeWidth="1.500" /><path d="M8 11l3 2-3 4 5 3 3-5-3-3 6 1-1 6" stroke="#eceeeb" strokeWidth="2" /></>);

const bookmarks: [string, ReactNode][] = [
  ['E-Mail', outlookIcon],
  ['ACL Anthology', aclIcon],
  ['Google Drive', driveIcon],
  ['wood-mind.com - Running', woodIcon],
  ['Submit', overleafIcon],
  ['OneDrive', oneDriveIcon],
  ['onedrive', microsoftIcon],
  ['Submissions(current)', aclIcon],
];

const tabs: { title: string; icon?: ReactNode; active?: boolean; divider?: boolean }[] = [
  { title: 'Editing guido/README.md', icon: <FaGithub size={32} />, divider: true },
  { title: 'SIGANN/guido at 2022-03', icon: <FaGithub size={32} />, divider: true },
  { title: 'New File', icon: <FaGithub size={32} /> },
  { title: 'Enhanced Dependencies', active: true },
  { title: 'Markdown Cheat Sheet | M', icon: markdownIcon, divider: true },
];

const SCHEME = 'https://';
const HOST = 'universaldependencies.org';
const PATH = '/u/overview/enhanced-syntax.html';

function useTextWidth(font: string) {
  return useMemo(() => {
    const ctx = document.createElement('canvas').getContext('2d')!;
    ctx.font = font;
    return (text: string) => Math.round(ctx.measureText(text).width);
  }, [font]);
}

function AddressBar() {
  const [url, setUrl] = useState(SCHEME + HOST + PATH);
  const width = useTextWidth(`30px ${UI}`);
  return (
    <Field>
      <FieldButton aria-label="Tracking protection">{shieldIcon}</FieldButton>
      <Rule />
      <FieldButton aria-label="Site information">{lockIcon}</FieldButton>
      <AddressInput
        aria-label="Address"
        value={url}
        onChange={e => setUrl(e.target.value)}
        $from={width(SCHEME)}
        $to={width(SCHEME + HOST)}
      />
      <FieldButton aria-label="Reader view">{readerIcon}</FieldButton>
      <FieldRule />
      <FieldButton aria-label="Page actions">{dotsIcon}</FieldButton>
      <FieldButton aria-label="Save to Pocket">{pocketIcon}</FieldButton>
      <FieldButton aria-label="Recent bookmark">{starClockIcon}</FieldButton>
      <FieldButton aria-label="Bookmark this page">{starIcon}</FieldButton>
    </Field>
  );
}

export default function App() {
  const [query, setQuery] = useState('eat sheet');
  return (
    <Desktop>
      <Global />
      <Panel>
        <PanelTitle>Enhanced Dependencies — Mozilla Firefox</PanelTitle>
        <Tray>
          <FaDropbox size={18} />
          {wifiIcon}
          <LanguageBadge>En</LanguageBadge>
          <FaBluetoothB size={14} opacity={0.4} />
          {mailIcon}
          {batteryIcon}
          {volumeIcon}
          <time>21:40</time>
          {powerIcon}
        </Tray>
      </Panel>
      <Workspace>
        <Launcher aria-label="Launcher">
          {apps.map(app => (
            <Tile key={app.name} $tone={app.tone} aria-label={app.name}>
              {app.icon}
              {app.windows && <Pips>{Array.from({ length: app.windows }, (_, i) => <Pip key={i} />)}</Pips>}
              {app.focused && <Pip $flip />}
            </Tile>
          ))}
          <Tile $last aria-label="Trash">{trashIcon}</Tile>
        </Launcher>
        <Browser>
          <TabStrip role="tablist">
            {tabs.map(tab => (
              <Tab key={tab.title} $active={tab.active} $divider={tab.divider}>
                {tab.icon && <Favicon>{tab.icon}</Favicon>}
                <TabTitle role="tab" aria-selected={!!tab.active}>{tab.title}</TabTitle>
                <CloseButton aria-label="Close tab">{closeIcon}</CloseButton>
              </Tab>
            ))}
            <NewTab aria-label="New tab">{plusIcon}</NewTab>
          </TabStrip>
          <Toolbar>
            <ToolButton $round aria-label="Back">{backIcon}</ToolButton>
            <ToolButton $faded aria-label="Forward">{forwardIcon}</ToolButton>
            <ToolButton aria-label="Reload">{reloadIcon}</ToolButton>
            <ToolButton aria-label="Home">{homeIcon}</ToolButton>
            <AddressBar />
            <Field $search>
              <FieldButton aria-label="Search engine">{searchIcon}</FieldButton>
              <TextInput aria-label="Search" value={query} onChange={e => setQuery(e.target.value)} />
              <FieldButton aria-label="Search now">{goIcon}</FieldButton>
            </Field>
            <ToolButton aria-label="Downloads">{downloadIcon}</ToolButton>
            <ToolButton aria-label="Scholar">{scholarIcon}</ToolButton>
            <ToolButton aria-label="Bookmarks">{thinStarIcon}</ToolButton>
            <ToolButton aria-label="Adblock Plus">{abpIcon}</ToolButton>
            <ToolButton aria-label="Sidebars">{sidebarIcon}</ToolButton>
            <ToolButton aria-label="Favourites">{heartIcon}</ToolButton>
            <ToolButton aria-label="Account">{accountIcon}</ToolButton>
            <Rule $tall />
            <ToolButton aria-label="Menu">{menuIcon}<Alert>{alertIcon}</Alert></ToolButton>
          </Toolbar>
          <Bookmarks aria-label="Bookmarks">
            {bookmarks.map(([label, icon]) => (
              <Bookmark key={label} href="#">{icon}<BookmarkLabel>{label}</BookmarkLabel></Bookmark>
            ))}
            <Bookmark href="#" $end>{folderIcon}<BookmarkLabel>Other Bookmarks</BookmarkLabel></Bookmark>
          </Bookmarks>
          <Viewport>
            <Article>
              <Paragraph>(See also the guidelines on <Link href="#">ellipsis</Link>.)</Paragraph>
              <Paragraph>
                In the <em>enhanced</em> representation, we add special empty (null) nodes in clauses in which a
                predicate is elided. (Although the node is termed ‘empty’ in the CoNLL-U format specification, and
                although it does not correspond to an overt surface token, its FORM, LEMMA, UPOS, XPOS and FEATS may be
                optionally filled with the assumed values; here they can be copied from the overt occurrence of the
                predicate.)
              </Paragraph>
              <Figures>
                <Diagram no={1} origin={334} height={140} lines={basicGapping} />
                <Diagram no={2} origin={1362} height={158} lines={enhancedGapping} />
                <Diagram no={3} origin={334} height={158} lines={basicControl} />
                <Diagram no={4} origin={1362} height={348} lines={enhancedControl} />
              </Figures>
              <Paragraph $loose>
                Note that this is a case in which the <em>enhanced</em> UD graph is not a supergraph of
                the <em>basic</em> tree as the <em>basic</em> tree contains <Code>orphan</Code> relations, which are
                not present in the <em>enhanced</em> UD graph.
              </Paragraph>
              <Heading>Propagation of incoming dependencies to conjuncts</Heading>
              <Paragraph>
                In the <em>basic</em> representation, the governor and dependents of a conjoined phrase are all attached
                to the first conjunct. This often leads to very long dependency paths between content words.
                The <em>enhanced</em> representation therefore also contains dependencies between the other conjuncts
                and the governor and dependents of the phrase.
              </Paragraph>
            </Article>
            <ScrollTrack><ScrollThumb /></ScrollTrack>
          </Viewport>
        </Browser>
      </Workspace>
    </Desktop>
  );
}
